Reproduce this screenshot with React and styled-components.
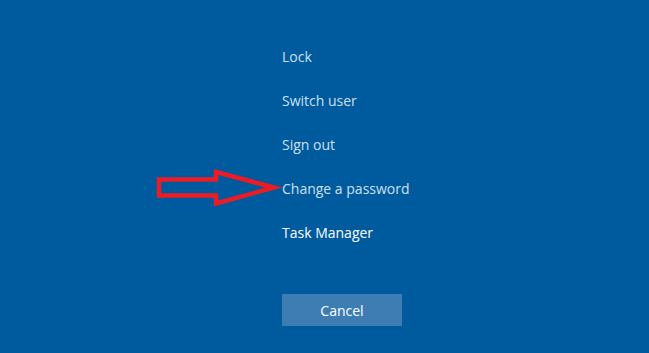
import React from 'react';
import styled, { createGlobalStyle } from 'styled-components';

const GlobalStyle = createGlobalStyle`
  html, body {
    margin: 0;
    padding: 0;
    background: #005a9e;
  }
  body {
    font-family: "Open Sans", "Noto Sans", "Liberation Sans", sans-serif;
  }
`;

const items = ['Lock', 'Switch user', 'Sign out', 'Change a password'];

const App = () => {
  return (
    <>
      <GlobalStyle />
      <Screen>
        <Menu>
          {items.map((label) => (
            <MenuItem key={label}>{label}</MenuItem>
          ))}
          <MenuItem bright>Task Manager</MenuItem>
          <CancelButton>Cancel</CancelButton>
        </Menu>
        <Arrow width="140" height="50" viewBox="0 0 140 50">
          <polygon
            points="9,19.5 66,19.5 66,12 124,27.5 66,43.5 66,35.5 9,35.5"
            fill="none"
            stroke="#ed1c24"
            strokeWidth="4.5"
            strokeLinejoin="miter"
          />
        </Arrow>
      </Screen>
    </>
  );
};

export default App;

const Screen = styled.div`
  position: relative;
  width: 649px;
  height: 353px;
  background: #005a9e;
  overflow: hidden;
`;
const Menu = styled.div`
  display: flex;
  flex-direction: column;
  align-items: flex-start;
  padding: 35px 0 0 282px;
`;
const MenuItem = styled.div`
  height: 44px;
  line-height: 44px;
  font-size: 14px;
  color: ${(p) => (p.bright ? '#ffffff' : '#cde0f0')};
  cursor: default;
`;
const CancelButton = styled.button`
  margin-top: 39px;
  width: 120px;
  height: 32px;
  border: none;
  background: #3d7db4;
  color: #ffffff;
  font-family: inherit;
  font-size: 14px;
  padding: 0;
`;
const Arrow = styled.svg`
  position: absolute;
  left: 150px;
  top: 160px;
`;
